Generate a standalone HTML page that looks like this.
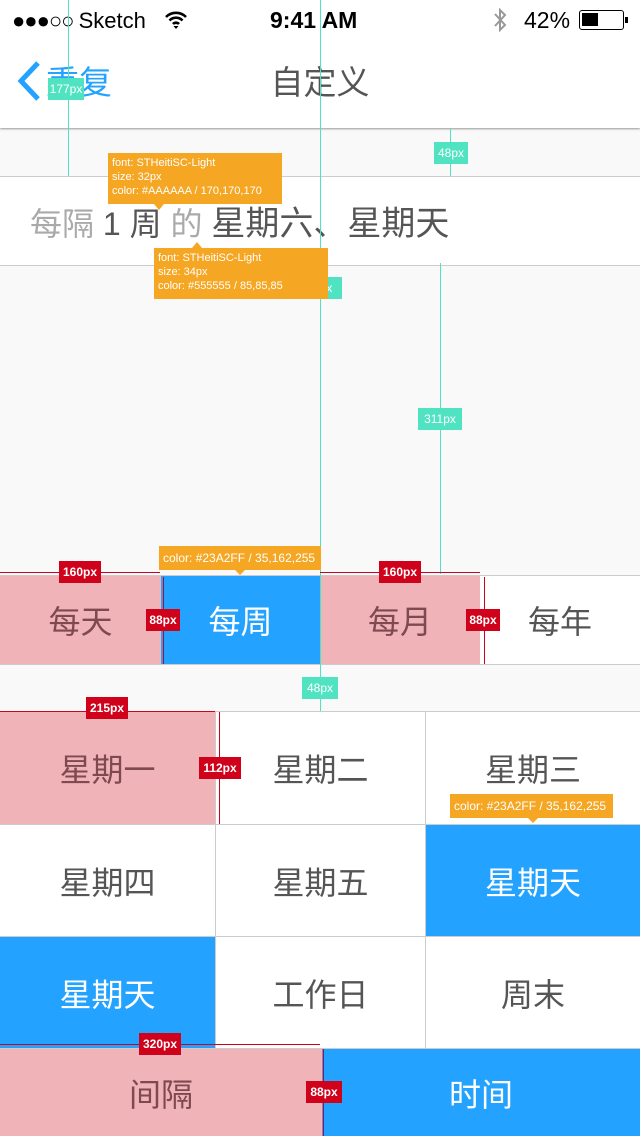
<!DOCTYPE html>
<html><head><meta charset="utf-8">
<style>
*{margin:0;padding:0;box-sizing:border-box}
body{width:640px;height:1136px;position:relative;overflow:hidden;background:#f9f9f9;font-family:"Liberation Sans","Noto Sans CJK SC",sans-serif}
.a{position:absolute}
.c{position:absolute;display:flex;align-items:center;justify-content:center;font-size:32px;color:#555}
.pk{background:#efb3b8;color:#7e4a4f}
.bl{background:#23a2ff;color:#fff}
.wh{background:#fff}
.hl{position:absolute;height:1px;background:#ccc;left:0;width:640px}
.vl{position:absolute;width:1px;background:#ccc}
.teal{position:absolute;background:#50e3c2;color:#fff;font-size:12px;display:flex;align-items:center;justify-content:center;height:22px}
.red{position:absolute;background:#d0021b;color:#fff;font-size:12px;font-weight:bold;display:flex;align-items:center;justify-content:center;height:22px}
.org{position:absolute;background:#f5a623;color:#fff;font-size:11px;line-height:14px;padding:3px 4px}
.tri{position:absolute;width:0;height:0;border-left:5px solid transparent;border-right:5px solid transparent}
.rl{position:absolute;background:#d0021b}
</style></head><body>
<div class="a wh" style="left:0;top:0;width:640px;height:128px;box-shadow:0 1px 2px rgba(0,0,0,.4)"></div>
<div class="a" style="left:12px;top:8px;font-size:22px;color:#000;letter-spacing:-1px">●●●○○ <span style="letter-spacing:0">Sketch</span></div>
<svg class="a" style="left:164px;top:10px" width="24" height="20" viewBox="0 0 24 20"><path d="M2 7a14 14 0 0 1 20 0M5.5 10.5a9 9 0 0 1 13 0M9 14a4 4 0 0 1 6 0" stroke="#000" stroke-width="2.6" fill="none"/><path d="M9.5 16l2.5 3 2.5-3z" fill="#000"/></svg>
<div class="a" style="left:270px;top:7px;font-size:23px;font-weight:bold;color:#000">9:41 AM</div>
<svg class="a" style="left:492px;top:8px" width="16" height="24" viewBox="0 0 16 24"><path d="M3 6l10 11-5 5V2l5 5L3 18" stroke="#999" stroke-width="2" fill="none"/></svg>
<div class="a" style="left:524px;top:7px;font-size:23px;color:#000">42%</div>
<div class="a" style="left:579px;top:10px;width:45px;height:20px;border:1.5px solid #000;border-radius:3px"><div style="position:absolute;left:2px;top:2px;width:16px;height:13px;background:#000"></div></div>
<div class="a" style="left:625px;top:17px;width:3px;height:6px;background:#000"></div>
<svg class="a" style="left:16px;top:60px" width="26" height="42" viewBox="0 0 26 42"><path d="M22 3L5 21l17 18" stroke="#23a2ff" stroke-width="5" fill="none"/></svg>
<div class="a" style="left:46px;top:56px;font-size:33px;color:#23a2ff">重复</div>
<div class="a" style="left:0;top:56px;width:640px;text-align:center;font-size:33px;color:#555">自定义</div>
<div class="hl" style="top:176px"></div>
<div class="a wh" style="left:0;top:177px;width:640px;height:88px"></div>
<div class="hl" style="top:265px"></div>
<div class="a" style="left:30px;top:196px;font-size:32px;color:#aaa;white-space:nowrap">每隔 <span style="color:#555">1 周</span> 的 <span style="color:#555;font-size:34px">星期六、星期天</span></div>
<div class="hl" style="top:575px"></div>
<div class="c pk" style="left:0;top:576px;width:161px;height:88px">每天</div>
<div class="c bl" style="left:161px;top:576px;width:159px;height:88px">每周</div>
<div class="c pk" style="left:320px;top:576px;width:160px;height:88px">每月</div>
<div class="c wh" style="left:480px;top:576px;width:160px;height:88px">每年</div>
<div class="hl" style="top:664px"></div>
<div class="hl" style="top:711px"></div>
<div class="c pk" style="left:0;top:712px;width:215px;height:112px">星期一</div>
<div class="c wh" style="left:216px;top:712px;width:209px;height:112px">星期二</div>
<div class="c wh" style="left:426px;top:712px;width:214px;height:112px">星期三</div>
<div class="c wh" style="left:0;top:825px;width:215px;height:111px">星期四</div>
<div class="c wh" style="left:216px;top:825px;width:209px;height:111px">星期五</div>
<div class="c bl" style="left:426px;top:825px;width:214px;height:111px">星期天</div>
<div class="c bl" style="left:0;top:937px;width:215px;height:111px">星期天</div>
<div class="c wh" style="left:216px;top:937px;width:209px;height:111px">工作日</div>
<div class="c wh" style="left:426px;top:937px;width:214px;height:111px">周末</div>
<div class="hl" style="top:824px"></div><div class="hl" style="top:936px"></div><div class="hl" style="top:1048px"></div>
<div class="vl" style="left:215px;top:711px;height:337px"></div>
<div class="vl" style="left:425px;top:711px;height:337px"></div>
<div class="c pk" style="left:0;top:1049px;width:322px;height:87px">间隔</div>
<div class="c bl" style="left:322px;top:1049px;width:318px;height:87px">时间</div>
<div class="a" style="left:68px;top:0;width:1px;height:176px;background:#50e3c2"></div>
<div class="a" style="left:320px;top:0;width:1px;height:711px;background:#50e3c2"></div>
<div class="a" style="left:450px;top:129px;width:1px;height:47px;background:#50e3c2"></div>
<div class="a" style="left:440px;top:263px;width:1px;height:311px;background:#50e3c2"></div>
<div class="teal" style="left:48px;top:78px;width:36px">177px</div>
<div class="teal" style="left:434px;top:142px;width:34px">48px</div>
<div class="teal" style="left:418px;top:408px;width:44px">311px</div>
<div class="teal" style="left:302px;top:677px;width:36px">48px</div>
<div class="teal" style="left:310px;top:277px;width:32px">px</div>
<div class="org" style="left:108px;top:153px;width:174px;height:51px">font: STHeitiSC-Light<br>size: 32px<br>color: #AAAAAA / 170,170,170</div>
<div class="tri" style="left:154px;top:204px;border-top:6px solid #f5a623"></div>
<div class="org" style="left:154px;top:248px;width:174px;height:51px">font: STHeitiSC-Light<br>size: 34px<br>color: #555555 / 85,85,85</div>
<div class="tri" style="left:192px;top:242px;border-bottom:6px solid #f5a623"></div>
<div class="org" style="left:159px;top:546px;width:162px;height:24px;font-size:12px;line-height:18px">color: #23A2FF / 35,162,255</div>
<div class="tri" style="left:235px;top:570px;border-top:5px solid #f5a623"></div>
<div class="org" style="left:450px;top:794px;width:163px;height:24px;font-size:12px;line-height:18px">color: #23A2FF / 35,162,255</div>
<div class="tri" style="left:528px;top:818px;border-top:5px solid #f5a623"></div>
<div class="rl" style="left:0;top:572px;width:160px;height:1px"></div>
<div class="rl" style="left:320px;top:572px;width:160px;height:1px"></div>
<div class="rl" style="left:0;top:711px;width:215px;height:1px"></div>
<div class="rl" style="left:0;top:1044px;width:320px;height:1px"></div>
<div class="rl" style="left:163px;top:577px;width:1px;height:87px"></div>
<div class="rl" style="left:484px;top:577px;width:1px;height:87px"></div>
<div class="rl" style="left:219px;top:712px;width:1px;height:112px"></div>
<div class="rl" style="left:323px;top:1049px;width:1px;height:87px"></div>
<div class="red" style="left:59px;top:561px;width:42px">160px</div>
<div class="red" style="left:379px;top:561px;width:42px">160px</div>
<div class="red" style="left:146px;top:609px;width:34px">88px</div>
<div class="red" style="left:466px;top:609px;width:34px">88px</div>
<div class="red" style="left:86px;top:697px;width:42px">215px</div>
<div class="red" style="left:199px;top:757px;width:42px">112px</div>
<div class="red" style="left:139px;top:1033px;width:42px">320px</div>
<div class="red" style="left:306px;top:1081px;width:36px">88px</div>
</body></html>
